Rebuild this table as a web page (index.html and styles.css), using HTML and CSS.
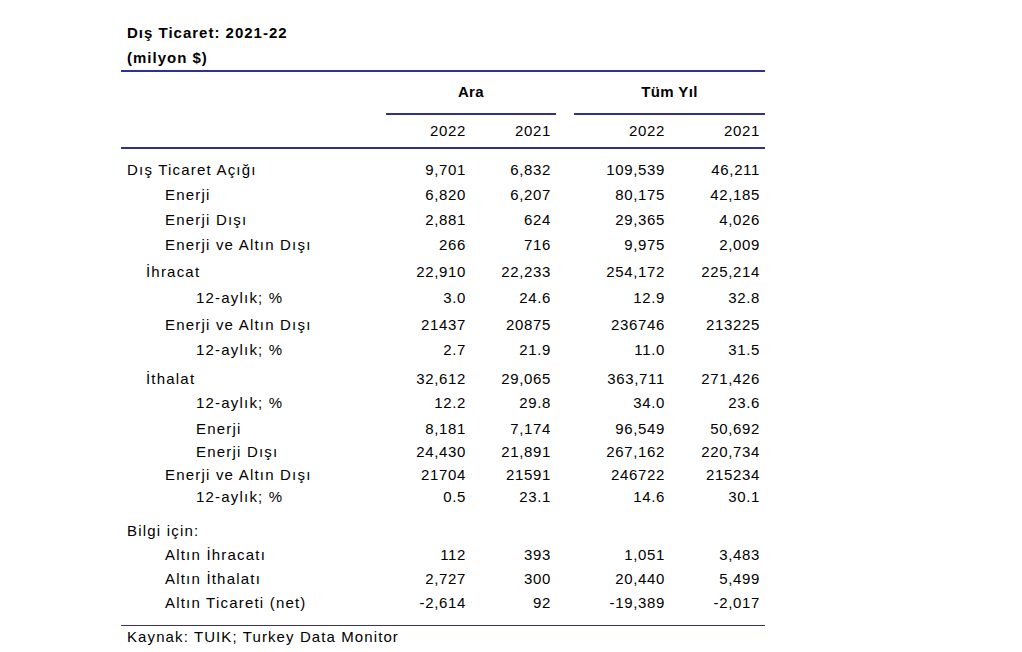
FILE: index.html
```html
<!DOCTYPE html>
<html lang="tr">
<head>
<meta charset="utf-8">
<title>Dış Ticaret: 2021-22</title>
<link rel="stylesheet" href="styles.css">
</head>
<body>
<div class="sheet">
  <div class="title">
    <div>Dış Ticaret: 2021-22</div>
    <div>(milyon $)</div>
  </div>
  <div class="head">
    <div class="grid group-row">
      <div></div>
      <div class="group">Ara</div>
      <div></div>
      <div class="group">Tüm Yıl</div>
    </div>
    <div class="grid year-row">
      <div></div>
      <div class="num">2022</div>
      <div class="num">2021</div>
      <div></div>
      <div class="num">2022</div>
      <div class="num">2021</div>
    </div>
  </div>
  <div class="body">
    <div class="grid row h25"><div class="lab l0">Dış Ticaret Açığı</div><div class="num">9,701</div><div class="num">6,832</div><div></div><div class="num">109,539</div><div class="num">46,211</div></div>
    <div class="grid row h25"><div class="lab l2">Enerji</div><div class="num">6,820</div><div class="num">6,207</div><div></div><div class="num">80,175</div><div class="num">42,185</div></div>
    <div class="grid row h25"><div class="lab l2">Enerji Dışı</div><div class="num">2,881</div><div class="num">624</div><div></div><div class="num">29,365</div><div class="num">4,026</div></div>
    <div class="grid row h27"><div class="lab l2">Enerji ve Altın Dışı</div><div class="num">266</div><div class="num">716</div><div></div><div class="num">9,975</div><div class="num">2,009</div></div>
    <div class="grid row h26"><div class="lab l1">İhracat</div><div class="num">22,910</div><div class="num">22,233</div><div></div><div class="num">254,172</div><div class="num">225,214</div></div>
    <div class="grid row h27"><div class="lab l3">12-aylık; %</div><div class="num">3.0</div><div class="num">24.6</div><div></div><div class="num">12.9</div><div class="num">32.8</div></div>
    <div class="grid row h25"><div class="lab l2">Enerji ve Altın Dışı</div><div class="num">21437</div><div class="num">20875</div><div></div><div class="num">236746</div><div class="num">213225</div></div>
    <div class="grid row h29"><div class="lab l3">12-aylık; %</div><div class="num">2.7</div><div class="num">21.9</div><div></div><div class="num">11.0</div><div class="num">31.5</div></div>
    <div class="grid row h24"><div class="lab l1">İthalat</div><div class="num">32,612</div><div class="num">29,065</div><div></div><div class="num">363,711</div><div class="num">271,426</div></div>
    <div class="grid row h26"><div class="lab l3">12-aylık; %</div><div class="num">12.2</div><div class="num">29.8</div><div></div><div class="num">34.0</div><div class="num">23.6</div></div>
    <div class="grid row h23"><div class="lab l3">Enerji</div><div class="num">8,181</div><div class="num">7,174</div><div></div><div class="num">96,549</div><div class="num">50,692</div></div>
    <div class="grid row h23"><div class="lab l3">Enerji Dışı</div><div class="num">24,430</div><div class="num">21,891</div><div></div><div class="num">267,162</div><div class="num">220,734</div></div>
    <div class="grid row h22"><div class="lab l2">Enerji ve Altın Dışı</div><div class="num">21704</div><div class="num">21591</div><div></div><div class="num">246722</div><div class="num">215234</div></div>
    <div class="grid row h34"><div class="lab l3">12-aylık; %</div><div class="num">0.5</div><div class="num">23.1</div><div></div><div class="num">14.6</div><div class="num">30.1</div></div>
    <div class="grid row h24"><div class="lab l0">Bilgi için:</div><div></div><div></div><div></div><div></div><div></div></div>
    <div class="grid row h24"><div class="lab l2">Altın İhracatı</div><div class="num">112</div><div class="num">393</div><div></div><div class="num">1,051</div><div class="num">3,483</div></div>
    <div class="grid row h24"><div class="lab l2">Altın İthalatı</div><div class="num">2,727</div><div class="num">300</div><div></div><div class="num">20,440</div><div class="num">5,499</div></div>
    <div class="grid row h32"><div class="lab l2">Altın Ticareti (net)</div><div class="num">-2,614</div><div class="num">92</div><div></div><div class="num">-19,389</div><div class="num">-2,017</div></div>
  </div>
  <div class="source">Kaynak: TUIK; Turkey Data Monitor</div>
</div>
</body>
</html>
```

FILE: styles.css
```css
html, body {
  margin: 0;
  padding: 0;
  background: #ffffff;
}

body {
  font-family: "Liberation Sans", Arial, sans-serif;
  font-size: 15px;
  color: #000000;
}

.sheet {
  width: 644px;
  margin-left: 121px;
}

.title {
  padding: 20px 0 0 6px;
  font-weight: bold;
  font-size: 15px;
  letter-spacing: 1px;
  line-height: 25px;
}

.head {
  border-top: 2px solid #2e3192;
  border-bottom: 2px solid #2e3192;
}

.grid {
  display: grid;
  grid-template-columns: 265px 85px 85px 18px 96px 95px;
  letter-spacing: 0.65px;
}

.group-row {
  padding-top: 10px;
}

.group {
  grid-column: span 2;
  text-align: center;
  font-weight: bold;
  letter-spacing: 0.4px;
  line-height: 20px;
  padding-bottom: 11px;
  border-bottom: 2px solid #2e3192;
}

.year-row {
  padding: 6px 0;
  line-height: 20px;
}

.num {
  text-align: right;
  padding-right: 5px;
}

.body {
  padding-top: 11px;
}

.row {
  line-height: 20px;
  align-items: start;
}

.lab {
  white-space: nowrap;
  letter-spacing: 1.2px;
}

.l0 { padding-left: 6px; }
.l1 { padding-left: 25px; }
.l2 { padding-left: 44px; }
.l3 { padding-left: 75px; }

.h22 { height: 22px; }
.h23 { height: 23px; }
.h24 { height: 24px; }
.h25 { height: 25px; }
.h26 { height: 26px; }
.h27 { height: 27px; }
.h29 { height: 29px; }
.h32 { height: 32px; }
.h34 { height: 34px; }

.source {
  border-top: 1px solid #2e3192;
  padding: 1px 0 0 6px;
  line-height: 20px;
  letter-spacing: 1.1px;
}
```
